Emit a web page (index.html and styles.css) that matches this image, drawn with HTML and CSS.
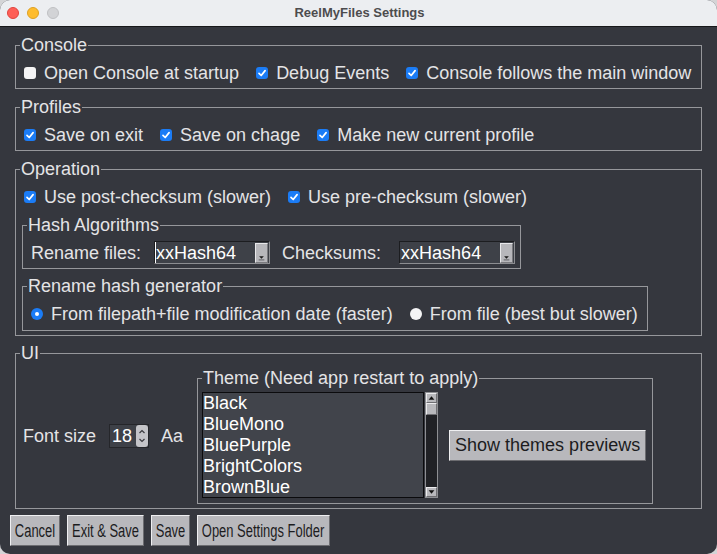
FILE: index.html
```html
<!DOCTYPE html>
<html>
<head>
<meta charset="utf-8">
<title>ReelMyFiles Settings</title>
<link rel="stylesheet" href="styles.css">
</head>
<body>
<div class="win">
  <div class="titlebar">
    <div class="lights">
      <span class="light red"></span><span class="light yellow"></span><span class="light gray"></span>
    </div>
    <div class="title">ReelMyFiles Settings</div>
  </div>

  <div class="body">
    <fieldset class="frame">
      <legend>Console</legend>
      <div class="row">
        <label class="check"><span class="box"></span><span>Open Console at startup</span></label>
        <label class="check"><span class="box on"><svg viewBox="0 0 12 12"><path d="M3 6.3 5.2 8.5 9.1 3.6"/></svg></span><span>Debug Events</span></label>
        <label class="check"><span class="box on"><svg viewBox="0 0 12 12"><path d="M3 6.3 5.2 8.5 9.1 3.6"/></svg></span><span>Console follows the main window</span></label>
      </div>
    </fieldset>

    <fieldset class="frame gap8">
      <legend>Profiles</legend>
      <div class="row">
        <label class="check"><span class="box on"><svg viewBox="0 0 12 12"><path d="M3 6.3 5.2 8.5 9.1 3.6"/></svg></span><span>Save on exit</span></label>
        <label class="check"><span class="box on"><svg viewBox="0 0 12 12"><path d="M3 6.3 5.2 8.5 9.1 3.6"/></svg></span><span>Save on chage</span></label>
        <label class="check"><span class="box on"><svg viewBox="0 0 12 12"><path d="M3 6.3 5.2 8.5 9.1 3.6"/></svg></span><span>Make new current profile</span></label>
      </div>
    </fieldset>

    <fieldset class="frame gap8 op">
      <legend>Operation</legend>
      <div class="row">
        <label class="check"><span class="box on"><svg viewBox="0 0 12 12"><path d="M3 6.3 5.2 8.5 9.1 3.6"/></svg></span><span>Use post-checksum (slower)</span></label>
        <label class="check"><span class="box on"><svg viewBox="0 0 12 12"><path d="M3 6.3 5.2 8.5 9.1 3.6"/></svg></span><span>Use pre-checksum (slower)</span></label>
      </div>

      <fieldset class="frame hash">
        <legend>Hash Algorithms</legend>
        <div class="hrow">
          <span>Rename files:</span>
          <div class="combo first">
            <span class="caret"></span><span class="ctext">xxHash64</span>
            <span class="cbtn"><svg viewBox="0 0 11 19"><path d="M3 13h5l-2.5 2.6z"/><path d="M2.5 16.8h6" class="ln"/></svg></span>
          </div>
          <span class="lbl2">Checksums:</span>
          <div class="combo second">
            <span class="ctext">xxHash64</span>
            <span class="cbtn"><svg viewBox="0 0 11 19"><path d="M3 13h5l-2.5 2.6z"/><path d="M2.5 16.8h6" class="ln"/></svg></span>
          </div>
        </div>
      </fieldset>

      <fieldset class="frame gen">
        <legend>Rename hash generator</legend>
        <div class="row radrow">
          <label class="check"><span class="radio on"></span><span>From filepath+file modification date (faster)</span></label>
          <label class="check"><span class="radio"></span><span>From file (best but slower)</span></label>
        </div>
      </fieldset>
    </fieldset>

    <fieldset class="frame ui">
      <legend>UI</legend>
      <div class="uirow">
        <span>Font size</span>
        <div class="spin">
          <span class="stext">18</span>
          <span class="sarrows"><svg viewBox="0 0 12 22"><path d="M3.5 8 6 5.5 8.5 8M3.5 14 6 16.5 8.5 14"/></svg></span>
        </div>
        <span class="aa">Aa</span>

        <fieldset class="frame theme">
          <legend>Theme (Need app restart to apply)</legend>
          <div class="themerow">
            <ul class="list">
              <li>Black</li>
              <li>BlueMono</li>
              <li>BluePurple</li>
              <li>BrightColors</li>
              <li>BrownBlue</li>
            </ul>
            <div class="scroll">
              <span class="sbtn"><svg viewBox="0 0 11 9"><path d="M2 6.5h7L5.5 2.5z"/></svg></span>
              <span class="thumb"></span>
              <span class="track"></span>
              <span class="sbtn"><svg viewBox="0 0 11 9"><path d="M2 2.5h7L5.5 6.5z"/></svg></span>
            </div>
            <button class="btn wide">Show themes previews</button>
          </div>
        </fieldset>
      </div>
    </fieldset>
  </div>

  <div class="buttons">
    <button class="btn narrow w-cancel"><span class="nt">Cancel</span></button>
    <button class="btn narrow w-exit"><span class="nt">Exit &amp; Save</span></button>
    <button class="btn narrow w-save"><span class="nt">Save</span></button>
    <button class="btn narrow w-open"><span class="nt">Open Settings Folder</span></button>
  </div>
</div>
</body>
</html>
```

FILE: styles.css
```css
* { box-sizing: border-box; }

html, body {
  margin: 0;
  padding: 0;
  background: #d4d4d6;
}

.win {
  width: 717px;
  height: 554px;
  border-radius: 10px;
  overflow: hidden;
  background: #35373e;
  color: #e4e4e6;
  font-family: "Liberation Sans", Arial, sans-serif;
  font-size: 18px;
  line-height: 20px;
}

.titlebar {
  height: 27px;
  background: #eceef1;
  border-bottom: 1px solid #17181a;
  display: grid;
  align-items: center;
}

.lights {
  grid-area: 1 / 1;
  display: flex;
  gap: 8px;
  padding-left: 7px;
}

.light {
  width: 12px;
  height: 12px;
  border-radius: 50%;
}
.red { background: #fe5f57; border: 0.5px solid #e0443e; }
.yellow { background: #febc2e; border: 0.5px solid #dea123; }
.gray { background: #d2d3d6; border: 0.5px solid #bfc0c3; }

.title {
  grid-area: 1 / 1;
  text-align: center;
  font-weight: bold;
  font-size: 13px;
  color: #4c4c4e;
  padding-left: 2px;
}

.body {
  padding: 8px 15px 0;
  display: flex;
  flex-direction: column;
}

.frame {
  margin: 0;
  padding: 0;
  min-width: 0;
  border: 1px solid #96979b;
}

.frame > legend {
  margin-left: 4px;
  padding: 0 1px;
  line-height: 20px;
  font-size: 18px;
  color: #e4e4e6;
}

.gap8 { margin-top: 8px; }

.row {
  display: flex;
  align-items: center;
  gap: 17px;
  height: 33px;
  padding: 8px 0 5px 8px;
}

.check {
  display: flex;
  align-items: center;
  gap: 8px;
  white-space: nowrap;
}

.box {
  width: 12px;
  height: 12px;
  border-radius: 3px;
  background: #f4f4f5;
  display: flex;
}
.box.on { background: #1b7cf6; }
.box svg {
  width: 12px;
  height: 12px;
  fill: none;
  stroke: #ffffff;
  stroke-width: 1.7;
  stroke-linecap: round;
  stroke-linejoin: round;
}

.radio {
  width: 12px;
  height: 12px;
  border-radius: 50%;
  background: #f4f4f5;
  display: flex;
  align-items: center;
  justify-content: center;
}
.radio.on { background: #1b7cf6; }
.radio.on::after {
  content: "";
  width: 4px;
  height: 4px;
  border-radius: 50%;
  background: #ffffff;
}

.op { padding-bottom: 4px; }

.hash {
  margin: 3px 0 0 6px;
  width: 499px;
}
.hrow {
  display: flex;
  align-items: center;
  padding: 6px 0 4px 8px;
  white-space: nowrap;
}

.combo {
  width: 116px;
  height: 23px;
  display: flex;
  align-items: center;
  background: #3e4148;
  border: 1px solid #1c1d20;
  border-right-color: #8c8d91;
  border-bottom-color: #8c8d91;
  color: #ffffff;
  margin-left: 12px;
}
.combo.first { margin-left: 13px; }
.combo.second { margin-left: 18px; }
.lbl2 { margin-left: 12px; }

.caret {
  width: 1px;
  height: 21px;
  background: #ffffff;
}
.ctext {
  flex: 1;
  padding-left: 1px;
}
.combo.first .ctext { padding-left: 0; }

.cbtn {
  width: 13px;
  height: 20px;
  margin-right: 1px;
  background: #b7b7bb;
  border: 1px solid;
  border-color: #e8e8ea #7a7a7e #7a7a7e #e8e8ea;
  display: flex;
}
.cbtn svg { width: 11px; height: 18px; fill: #1a1a1a; }
.cbtn .ln { fill: none; stroke: #5a5a5e; stroke-width: 1; }

.gen {
  margin: 7px 0 0 6px;
  width: 626px;
}
.radrow {
  padding: 8px 0 6px 8px;
  height: 34px;
}

.ui { margin-top: 7px; }

.uirow {
  display: flex;
  align-items: center;
  padding: 5px 0 4px 7px;
  white-space: nowrap;
}

.spin {
  margin-left: 13px;
  width: 40px;
  height: 24px;
  display: flex;
  align-items: center;
  background: #3e4148;
  border: 1px solid #25262a;
  color: #ffffff;
}
.stext { flex: 1; padding-left: 2px; }
.sarrows {
  width: 12px;
  height: 22px;
  background: #c4c4c8;
  border-radius: 3px;
  display: flex;
}
.sarrows svg {
  width: 12px;
  height: 22px;
  fill: none;
  stroke: #3a3a3e;
  stroke-width: 1.2;
}

.aa { margin-left: 12px; }

.theme {
  margin-left: 14px;
  width: 456px;
}

.themerow {
  display: flex;
  align-items: center;
  padding: 4px 0 5px 4px;
}

.list {
  list-style: none;
  margin: 0;
  padding: 0;
  width: 222px;
  height: 106px;
  background: #41444b;
  border: 1px solid #0b0b0d;
  color: #ffffff;
  line-height: 21px;
}

.scroll {
  margin-left: 1px;
  width: 13px;
  height: 106px;
  display: flex;
  flex-direction: column;
  background: #202125;
  border: 1px solid #8e8f93;
}
.sbtn {
  height: 10px;
  background: #b8b8bc;
  border: 1px solid;
  border-color: #ececee #6e6e72 #6e6e72 #ececee;
  display: flex;
}
.sbtn svg { width: 11px; height: 8px; fill: #111; }
.thumb {
  height: 12px;
  background: #b8b8bc;
  border: 1px solid;
  border-color: #ececee #6e6e72 #6e6e72 #ececee;
}
.track { flex: 1; }

.btn {
  height: 31px;
  margin: 0;
  background: #b8b8bc;
  color: #1c1c1e;
  border: 1px solid;
  border-color: #efeff1 #6c6c70 #6c6c70 #efeff1;
  border-radius: 0;
  font-family: "Liberation Sans", Arial, sans-serif;
  font-size: 18px;
  line-height: 20px;
  padding: 0 5px;
  white-space: nowrap;
}
.btn.wide { margin-left: 11px; width: 197px; }

.btn.narrow {
  display: flex;
  align-items: center;
  justify-content: center;
  padding: 0;
  overflow: visible;
}
.nt {
  display: inline-block;
  transform: scaleX(0.72);
}
.w-cancel { width: 50px; }
.w-exit { width: 77px; }
.w-save { width: 39px; }
.w-open { width: 133px; }

.buttons {
  display: flex;
  gap: 7px;
  padding: 6px 10px 0;
}
```
